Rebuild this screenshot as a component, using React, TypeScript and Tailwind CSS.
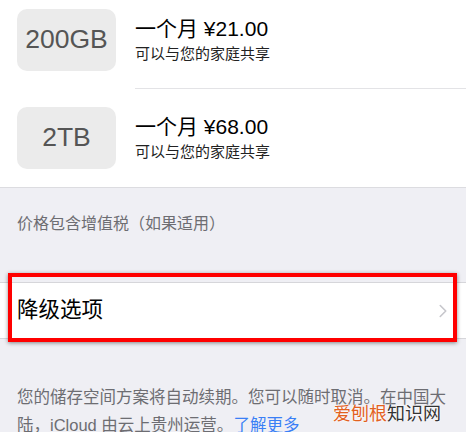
import { FiChevronRight } from "react-icons/fi";

const plans = [
  { size: "200GB", price: "一个月 ¥21.00", first: true },
  { size: "2TB", price: "一个月 ¥68.00", first: false },
];

const font = "font-['Liberation_Sans','Noto_Sans_CJK_SC',sans-serif]";

export default function App() {
  return (
    <div className={`w-[466px] h-[432px] overflow-hidden bg-[#efeff4] relative ${font}`}>
      {/* 套餐列表 */}
      <div className="bg-white border-b border-[#dcdce0]">
        {plans.map((p) => (
          <div key={p.size} className={`flex items-center pl-[17px] ${p.first ? "pt-[9px]" : "pt-[18px]"}`}>
            <div className="w-[99px] h-[62px] rounded-[10px] bg-[#ebebeb] flex items-center justify-center text-[26.5px] text-[#555555] shrink-0 mb-[18px]">
              {p.size}
            </div>
            <div className={`flex-1 ml-[19px] self-stretch flex flex-col justify-center pb-[18px] ${p.first ? "border-b border-[#e3e3e6]" : ""}`}>
              <div className="text-[21px] leading-[26px] text-black">{p.price}</div>
              <div className="text-[15px] leading-[20px] text-[#222] mt-[2px]">可以与您的家庭共享</div>
            </div>
          </div>
        ))}
      </div>

      <div className="px-[17px] pt-[24px] h-[94px] text-[16px] text-[#6d6d72]">
        价格包含增值税（如果适用）
      </div>

      {/* 降级选项 */}
      <div className="relative bg-white border-y border-[#d6d6da] h-[57px] flex items-center pl-[17px] pr-[12px]">
        <span className="text-[21.5px] text-black flex-1">降级选项</span>
        <FiChevronRight className="text-[#c7c7cc] w-[22px] h-[26px] stroke-[1.75]" />
        <div className="absolute left-[8px] right-[9px] top-[-10px] bottom-[-4px] border-[4px] border-[#ff0000] shadow-[0_1px_4px_rgba(0,0,0,0.45)] pointer-events-none" />
      </div>

      <p className="pl-[17px] pr-[8px] pt-[44px] text-[16.5px] leading-[28px] text-[#6d6d72]">
        您的储存空间方案将自动续期。您可以随时取消。在中国大陆，iCloud 由云上贵州运营。
        <span className="text-[#3a7ff6]">了解更多</span>
      </p>

      <div className="absolute left-[333px] top-[402px] text-[18px] leading-[24px] [text-shadow:0_0_2px_#fff,0_0_2px_#fff]">
        <span className="text-[#e2611f]">爱刨根</span>
        <span className="text-[#333]">知识网</span>
      </div>
    </div>
  );
}
